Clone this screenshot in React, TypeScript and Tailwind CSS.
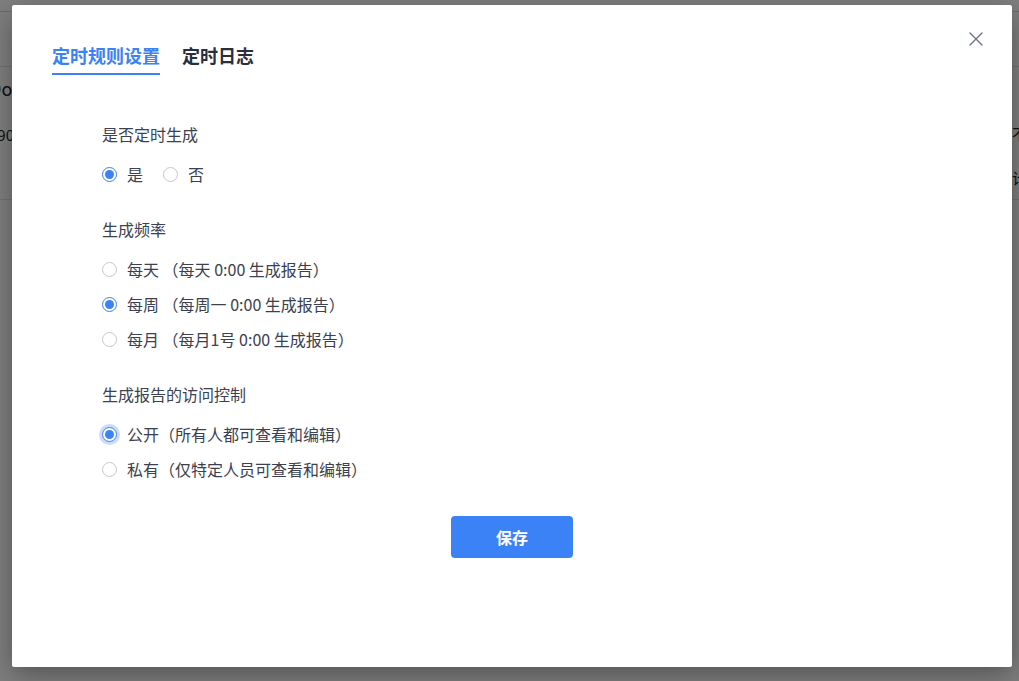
import React, { useState } from 'react';

const FONT = { fontFamily: '"Noto Sans CJK SC", "Noto Sans", sans-serif' };

interface RadioProps {
  checked: boolean;
  focused?: boolean;
  label: string;
  onSelect: () => void;
}

const Radio: React.FC<RadioProps> = ({ checked, focused, label, onSelect }) => (
  <button type="button" onClick={onSelect} className="flex items-center h-6 text-left">
    <span
      className={`flex items-center justify-center w-[15px] h-[15px] rounded-full border bg-white shrink-0 ${
        checked ? 'border-[#3b82f6]' : 'border-[#c3c7cf]'
      } ${focused ? 'ring-[3px] ring-[#c9dcfd]' : ''}`}
    >
      {checked && <span className="w-[9px] h-[9px] rounded-full bg-[#3b82f6]" />}
    </span>
    <span className="ml-[10px] text-[16px] leading-6 text-[#3b4150] whitespace-pre">{label}</span>
  </button>
);

const App: React.FC = () => {
  const [tab, setTab] = useState(0);
  const [auto, setAuto] = useState(0);
  const [freq, setFreq] = useState(1);
  const [access, setAccess] = useState(0);

  const tabs = ['定时规则设置', '定时日志'];
  const freqs = ['每天 （每天 0:00 生成报告）', '每周 （每周一 0:00 生成报告）', '每月 （每月1号 0:00 生成报告）'];
  const accesses = ['公开（所有人都可查看和编辑）', '私有（仅特定人员可查看和编辑）'];

  return (
    <div className="relative w-[1019px] h-[681px] overflow-hidden bg-white" style={FONT}>
      {/* page underneath */}
      <div className="flex flex-col text-[#222]">
        <div className="h-[12px] border-b border-[#d9d9d9]" />
        <div className="h-[55px] border-b border-[#e5e5e5]" />
        <div className="h-[133px] border-b border-[#e5e5e5] flex justify-between">
          <div className="-ml-[11px] pt-[9px]">
            <div className="text-[18px] leading-6">Do</div>
            <div className="pt-[23px] text-[15px] leading-6">890</div>
          </div>
          <div className="pt-[55px] text-right">
            <div className="text-[15px] leading-6 -mr-[8px]">否不</div>
            <div className="text-[15px] leading-6 pt-[20px] -mr-[8px]">共计</div>
          </div>
        </div>
      </div>

      {/* overlay */}
      <div className="absolute inset-0 bg-black/50" />

      {/* modal */}
      <div className="absolute left-[12px] top-[5px] w-[1000px] h-[662px] bg-white rounded-[2px] shadow-[0_8px_28px_rgba(0,0,0,0.35)]">
        <button type="button" className="absolute right-[27px] top-[25px] p-[2px] text-[#6b7280]">
          <svg width="14" height="14" viewBox="0 0 14 14" fill="none" stroke="currentColor" strokeWidth="1.4" strokeLinecap="round">
            <path d="M1 1 L13 13 M13 1 L1 13" />
          </svg>
        </button>

        <div className="pt-[37px] px-10">
          <div className="flex gap-[22px]">
            {tabs.map((t, i) => (
              <button
                key={t}
                type="button"
                onClick={() => setTab(i)}
                className={`pb-[5px] border-b-2 text-[18px] leading-[26px] font-bold ${
                  tab === i ? 'border-[#3b82f6] text-[#3b82f6]' : 'border-transparent text-[#2a2f3b]'
                }`}
              >
                {t}
              </button>
            ))}
          </div>
        </div>

        <div className="pl-[90px] pt-[47px] flex flex-col">
          <div className="text-[16px] leading-6 text-[#3b4150]">是否定时生成</div>
          <div className="flex gap-[20px] mt-4">
            <Radio checked={auto === 0} label="是" onSelect={() => setAuto(0)} />
            <Radio checked={auto === 1} label="否" onSelect={() => setAuto(1)} />
          </div>

          <div className="mt-[31px] text-[16px] leading-6 text-[#3b4150]">生成频率</div>
          <div className="flex flex-col gap-[11px] mt-4">
            {freqs.map((f, i) => (
              <Radio key={f} checked={freq === i} label={f} onSelect={() => setFreq(i)} />
            ))}
          </div>

          <div className="mt-[31px] text-[16px] leading-6 text-[#3b4150]">生成报告的访问控制</div>
          <div className="flex flex-col gap-[11px] mt-4">
            {accesses.map((a, i) => (
              <Radio key={a} checked={access === i} focused={i === 0 && access === 0} label={a} onSelect={() => setAccess(i)} />
            ))}
          </div>
        </div>

        <div className="flex justify-center pt-[35px]">
          <button type="button" className="w-[122px] h-[42px] rounded-[4px] bg-[#3b82f6] text-white text-[16px] font-bold">
            保存
          </button>
        </div>
      </div>
    </div>
  );
};

export default App;
